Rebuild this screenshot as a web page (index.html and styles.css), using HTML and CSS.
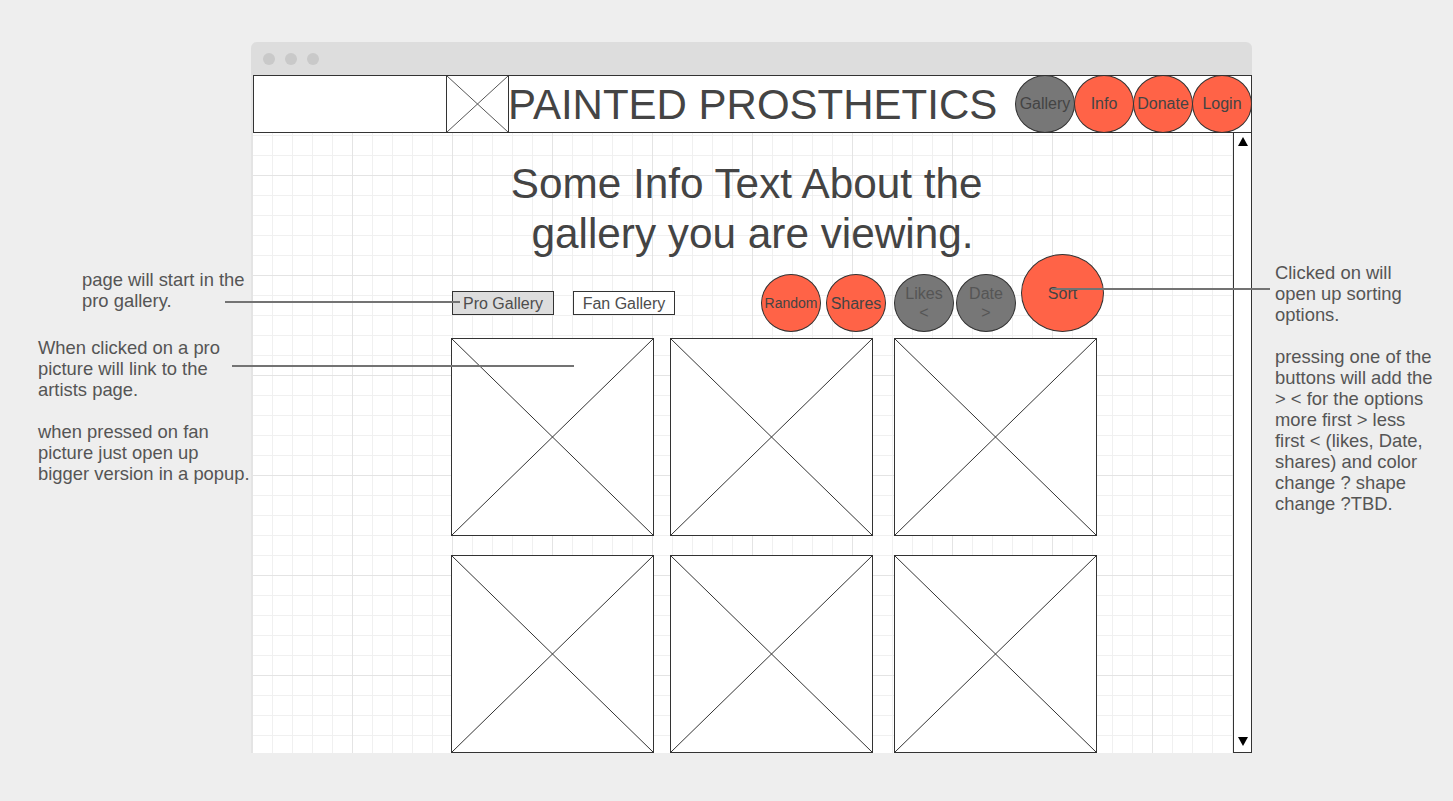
FILE: index.html
```html
<!DOCTYPE html>
<html lang="en">
<head>
<meta charset="utf-8">
<title>Painted Prosthetics wireframe</title>
<link rel="stylesheet" href="styles.css">
</head>
<body>
<div class="canvas">
  <div class="window">
    <div class="titlebar">
      <span class="dot"></span><span class="dot"></span><span class="dot"></span>
    </div>
    <div class="content">
      <header class="header">
        <div class="logo-blank"></div>
        <div class="logo-img">
          <svg class="xsvg" viewBox="0 0 100 100" preserveAspectRatio="none"><line x1="0" y1="0" x2="100" y2="100"/><line x1="100" y1="0" x2="0" y2="100"/></svg>
        </div>
        <h1 class="site-title">PAINTED PROSTHETICS</h1>
        <nav class="nav">
          <span class="bubble gray">Gallery</span>
          <span class="bubble orange">Info</span>
          <span class="bubble orange">Donate</span>
          <span class="bubble orange last">Login</span>
        </nav>
      </header>
      <div class="body-row">
        <main class="main">
          <p class="info">Some Info Text About the&nbsp;<br>gallery you are viewing.</p>
          <div class="controls">
            <span class="tab active">Pro Gallery</span>
            <span class="tab fan">Fan Gallery</span>
            <span class="sort-btn orange small random">Random</span>
            <span class="sort-btn orange shares">Shares</span>
            <span class="sort-btn gray likes">Likes<br>&lt;</span>
            <span class="sort-btn gray date">Date<br>&gt;</span>
            <span class="sort-btn orange sort">Sort</span>
          </div>
          <div class="gallery">
            <div class="pic"><svg class="xsvg" viewBox="0 0 100 100" preserveAspectRatio="none"><line x1="0" y1="0" x2="100" y2="100"/><line x1="100" y1="0" x2="0" y2="100"/></svg></div>
            <div class="pic"><svg class="xsvg" viewBox="0 0 100 100" preserveAspectRatio="none"><line x1="0" y1="0" x2="100" y2="100"/><line x1="100" y1="0" x2="0" y2="100"/></svg></div>
            <div class="pic"><svg class="xsvg" viewBox="0 0 100 100" preserveAspectRatio="none"><line x1="0" y1="0" x2="100" y2="100"/><line x1="100" y1="0" x2="0" y2="100"/></svg></div>
            <div class="pic"><svg class="xsvg" viewBox="0 0 100 100" preserveAspectRatio="none"><line x1="0" y1="0" x2="100" y2="100"/><line x1="100" y1="0" x2="0" y2="100"/></svg></div>
            <div class="pic"><svg class="xsvg" viewBox="0 0 100 100" preserveAspectRatio="none"><line x1="0" y1="0" x2="100" y2="100"/><line x1="100" y1="0" x2="0" y2="100"/></svg></div>
            <div class="pic"><svg class="xsvg" viewBox="0 0 100 100" preserveAspectRatio="none"><line x1="0" y1="0" x2="100" y2="100"/><line x1="100" y1="0" x2="0" y2="100"/></svg></div>
          </div>
        </main>
        <div class="scrollbar">
          <span class="arrow up"></span>
          <span class="arrow down"></span>
        </div>
      </div>
    </div>
  </div>

  <p class="note note-start">page will start in the<br>pro gallery.</p>
  <p class="note note-click">When clicked on a pro<br>picture will link to the<br>artists page.<br><br>when pressed on fan<br>picture just open up<br>bigger version in a popup.</p>
  <p class="note note-sort">Clicked on will<br>open up sorting<br>options.<br><br>pressing one of the<br>buttons will add the<br>&gt; &lt; for the options<br>more first &gt; less<br>first &lt; (likes, Date,<br>shares) and color<br>change ? shape<br>change ?TBD.</p>

  <span class="connector c1"></span>
  <span class="connector c2"></span>
  <span class="connector c3"></span>
</div>
</body>
</html>
```
FILE: styles.css
```css
* { box-sizing: border-box; }

html, body {
  margin: 0;
  padding: 0;
  background: #eeeeee;
}

body {
  font-family: "Liberation Sans", Arial, sans-serif;
  color: #444444;
}

.canvas {
  position: relative;
  width: 1453px;
  height: 801px;
  padding: 42px 0 0 251px;
  overflow: hidden;
}

.window {
  width: 1001px;
  height: 711px;
  display: flex;
  flex-direction: column;
}

.titlebar {
  height: 33px;
  flex: none;
  background: #dddddd;
  border-radius: 6px 6px 0 0;
  display: flex;
  align-items: center;
  gap: 10px;
  padding: 1px 0 0 12px;
}

.dot {
  width: 12px;
  height: 12px;
  border-radius: 50%;
  background: #c9c9c9;
}

.content {
  flex: 1;
  display: flex;
  flex-direction: column;
  border-left: 1px solid #e4e4e4;
  background-color: #ffffff;
  background-image:
    linear-gradient(to right, #e4e4e4 1px, transparent 1px),
    linear-gradient(to bottom, #e4e4e4 1px, transparent 1px),
    linear-gradient(to right, #f0f0f0 1px, transparent 1px),
    linear-gradient(to bottom, #f0f0f0 1px, transparent 1px);
  background-size: 100px 100px, 100px 100px, 20px 20px, 20px 20px;
  overflow: hidden;
}

/* header */
.header {
  flex: none;
  height: 58px;
  margin-left: 1px;
  border: 1px solid #333333;
  background: #ffffff;
  display: flex;
  align-items: center;
}

.logo-blank {
  width: 192px;
  align-self: stretch;
}

.logo-img {
  width: 63px;
  align-self: stretch;
  border-left: 1px solid #333333;
  border-right: 1px solid #333333;
}

.xsvg {
  display: block;
  width: 100%;
  height: 100%;
}

.xsvg line {
  stroke: #555555;
  stroke-width: 1;
  vector-effect: non-scaling-stroke;
}

.site-title {
  margin: 1px 0 0 -1px;
  font-size: 42px;
  font-weight: normal;
  line-height: 1;
  color: #444444;
  white-space: nowrap;
}

.nav {
  margin-left: auto;
  align-self: stretch;
  display: flex;
  margin-top: -1px;
  margin-bottom: -1px;
  margin-right: -1px;
}

.bubble {
  width: 60px;
  height: 58px;
  border: 1px solid #333333;
  border-radius: 50%;
  display: flex;
  align-items: center;
  justify-content: center;
  font-size: 16px;
  color: #444444;
}

.bubble + .bubble { margin-left: -1px; }

.orange { background: #ff6347; }
.gray { background: #777777; }

/* body */
.body-row {
  flex: 1;
  display: flex;
  min-height: 0;
}

.main {
  flex: 1;
  min-width: 0;
  overflow: hidden;
}

.info {
  margin: 26px 0 0 248px;
  width: 505px;
  height: 100px;
  font-size: 42.3px;
  line-height: 50px;
  text-align: center;
  color: #444444;
}

.controls {
  margin-top: -5px;
  height: 78px;
  display: flex;
  align-items: flex-end;
  padding-left: 200px;
}

.tab {
  align-self: flex-start;
  margin-top: 37px;
  width: 102px;
  height: 24px;
  padding-top: 1px;
  border: 1px solid #333333;
  background: #ffffff;
  font-size: 16px;
  color: #4d4d4d;
  display: flex;
  align-items: center;
  justify-content: center;
}

.tab.active { background: #dddddd; }
.tab.fan { margin-left: 19px; }

.sort-btn {
  width: 60px;
  height: 58px;
  border: 1px solid #333333;
  border-radius: 50%;
  display: flex;
  align-items: center;
  justify-content: center;
  text-align: center;
  font-size: 16px;
  line-height: 19px;
  color: #444444;
}

.sort-btn.gray { color: #555555; }
.sort-btn.small { font-size: 14px; }
.random { margin-left: 86px; }
.shares { margin-left: 5px; }
.likes { margin-left: 8px; }
.date { margin-left: 2px; }
.sort {
  margin-left: 5px;
  width: 83px;
  height: 78px;
}

.gallery {
  margin: 6px 0 0 199px;
  display: grid;
  grid-template-columns: 203px 203px 208px;
  grid-auto-rows: 198px;
  column-gap: 16px;
  row-gap: 19px;
}

.pic {
  border: 1px solid #333333;
  background: #ffffff;
}

.pic:nth-child(3n) { margin-left: 5px; }

.pic .xsvg line { stroke: #333333; }

.scrollbar {
  flex: none;
  width: 19px;
  margin-top: -1px;
  border: 1px solid #333333;
  background: #ffffff;
  display: flex;
  flex-direction: column;
  justify-content: space-between;
  align-items: center;
  padding: 4px 0 6px;
}

.arrow {
  width: 0;
  height: 0;
  border-left: 5px solid transparent;
  border-right: 5px solid transparent;
}

.arrow.up { border-bottom: 9px solid #000000; }
.arrow.down { border-top: 9px solid #000000; }

/* annotations on the free canvas */
.note {
  position: absolute;
  margin: 0;
  font-size: 18.4px;
  line-height: 21px;
  color: #555555;
  white-space: nowrap;
}

.note-start { left: 82px; top: 269px; }
.note-click { left: 38px; top: 337px; }
.note-sort { left: 1275px; top: 262px; }

.connector {
  position: absolute;
  height: 2px;
  background: #737373;
}

.c1 { left: 225px; top: 301px; width: 235px; }
.c2 { left: 232px; top: 365px; width: 342px; }
.c3 { left: 1052px; top: 288px; width: 218px; }
```
